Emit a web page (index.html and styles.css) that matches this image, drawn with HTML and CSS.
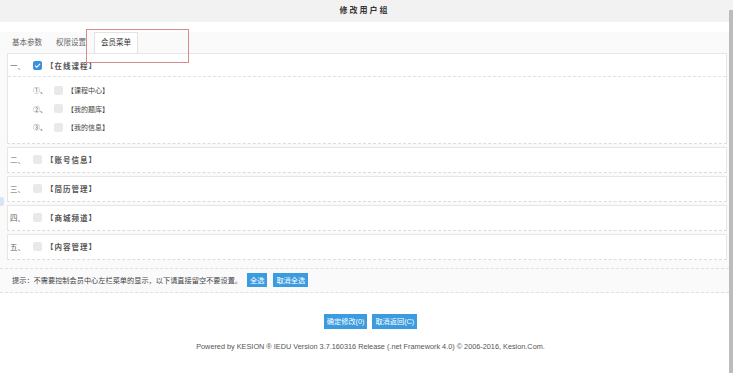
FILE: index.html
```html
<!DOCTYPE html>
<html lang="zh-CN">
<head>
  <meta charset="UTF-8" />
  <title>修改用户组</title>
  <link rel="stylesheet" href="styles.css">
</head>
<body>

<div class="page">
  <div class="main">
    <div class="title">修改用户组</div>

    <div class="wrap">
      <div class="tabs">
        <span class="tab">基本参数</span>
        <span class="tab">权限设置</span>
        <span class="tab active">会员菜单</span>
      </div>

      <!-- 一 -->
      <div class="box">
        <div class="head first">
          <span class="num">一、</span>
          <span class="chk on"><svg viewBox="0 0 10 10"><path d="M2.2 5.2 L4.2 7 L7.8 3.2" fill="none" stroke="#fff" stroke-width="1.3"/></svg></span>
          <span class="label">【在线课程】</span>
        </div>
        <div class="subs">
          <div class="sub"><span class="snum">①、</span><span class="chk"></span><span class="slabel">【课程中心】</span></div>
          <div class="sub"><span class="snum">②、</span><span class="chk"></span><span class="slabel">【我的题库】</span></div>
          <div class="sub"><span class="snum">③、</span><span class="chk"></span><span class="slabel">【我的信息】</span></div>
        </div>
      </div>

      <div class="box">
        <div class="head"><span class="num">二、</span><span class="chk"></span><span class="label">【账号信息】</span></div>
      </div>
      <div class="box">
        <div class="head"><span class="num">三、</span><span class="chk"></span><span class="label">【简历管理】</span></div>
      </div>
      <div class="box">
        <div class="head"><span class="num">四、</span><span class="chk"></span><span class="label">【商城频道】</span></div>
      </div>
      <div class="box">
        <div class="head"><span class="num">五、</span><span class="chk"></span><span class="label">【内容管理】</span></div>
      </div>

      <div class="tip">
        提示：不需要控制会员中心左栏菜单的显示，以下请直接留空不要设置。
        <button class="btn sm first">全选</button>
        <button class="btn sm">取消全选</button>
      </div>
    </div>

    <div class="actions">
      <button class="btn big">确定修改(0)</button>
      <button class="btn big">取消返回(C)</button>
    </div>

    <div class="footer">Powered by KESION ® IEDU Version 3.7.160316 Release (.net Framework 4.0) © 2006-2016, Kesion.Com.</div>
  </div>

  <div class="scroll"><div class="thumb"></div></div>
</div>

<div class="mark"></div>
<div class="handle"></div>

</body>
</html>
```

FILE: styles.css
```css
body {
  margin: 0;
  background: #fff;
  font-family: "Liberation Sans", "Noto Sans CJK SC", sans-serif;
  color: #555;
}
.page {
  display: flex;
  width: 733px;
  height: 373px;
  overflow: hidden;
}
.main {
  width: 729px;
}
.title {
  height: 22px;
  line-height: 22px;
  background: #f2f2f2;
  text-align: center;
  font-size: 8px;
  font-weight: bold;
  letter-spacing: 2px;
  color: #333;
}
.wrap {
  margin-top: 10px;
  background: #fafafb;
  padding: 0 2px 0 7px;
}
.tabs {
  height: 21px;
  margin-left: -7px;
  padding-left: 6px;
  display: flex;
  align-items: flex-end;
  gap: 2px;
}
.tab {
  height: 21px;
  line-height: 21px;
  padding: 0 6px;
  font-size: 7.5px;
  color: #666;
  box-sizing: border-box;
}
.tab.active {
  background: #fff;
  border: 1px solid #e3e3e3;
  border-bottom: none;
  color: #333;
  line-height: 20px;
}
.box {
  background: #fff;
  border: 1px solid #e6e6e6;
  border-bottom: 1px dashed #dcdcdc;
  margin-bottom: 3px;
}
.head {
  height: 24px;
  display: flex;
  align-items: center;
  padding-left: 2px;
}
.head.first {
  height: 22px;
  border-bottom: 1px dashed #e3e3e3;
}
.num {
  width: 23px;
  font-size: 7.5px;
  color: #666;
}
.chk {
  width: 9px;
  height: 9px;
  border-radius: 2px;
  background: #e9e9ea;
  display: inline-flex;
}
.chk.on {
  background: #3b8fdb;
}
.chk svg {
  width: 9px;
  height: 9px;
}
.label {
  margin-left: 4px;
  font-size: 7.5px;
  font-weight: bold;
  letter-spacing: 1px;
  color: #555;
}
.subs {
  padding: 4px 0 6px 25px;
}
.sub {
  height: 18.5px;
  display: flex;
  align-items: center;
}
.snum {
  width: 21px;
  font-size: 7px;
  color: #555;
}
.slabel {
  margin-left: 4px;
  font-size: 7px;
  color: #444;
}
.tip {
  margin-top: 8px;
  margin-left: -7px;
  margin-right: -2px;
  height: 23px;
  border-top: 1px dashed #e0e0e0;
  border-bottom: 1px dashed #e0e0e0;
  display: flex;
  align-items: center;
  padding-left: 12px;
  font-size: 7.2px;
  color: #444;
}
.btn {
  background: #3b9be0;
  color: #fff;
  border: none;
  font-family: inherit;
  padding: 0 3px;
  cursor: pointer;
}
.btn.sm {
  height: 14px;
  font-size: 7.2px;
  margin-left: 6px;
}
.btn.first {
  margin-left: 5px;
}
.actions {
  margin-top: 21px;
  display: flex;
  justify-content: center;
  gap: 5px;
  padding-left: 12px;
}
.btn.big {
  height: 15px;
  font-size: 7.2px;
  padding: 0 3px;
}
.footer {
  margin-top: 13px;
  text-align: center;
  font-size: 7.3px;
  color: #555;
  padding-left: 12px;
}
.scroll {
  width: 4px;
  background: #f2f2f2;
  padding-top: 10px;
}
.thumb {
  height: 100%;
  background: #bcbcbc;
}
.mark {
  position: absolute;
  left: 86px;
  top: 29px;
  width: 101px;
  height: 32px;
  border: 1px solid #d98a8c;
}
.handle {
  position: absolute;
  left: 0;
  top: 197px;
  width: 4px;
  height: 9px;
  background: #d8e6f4;
  border-radius: 0 2px 2px 0;
}
```
